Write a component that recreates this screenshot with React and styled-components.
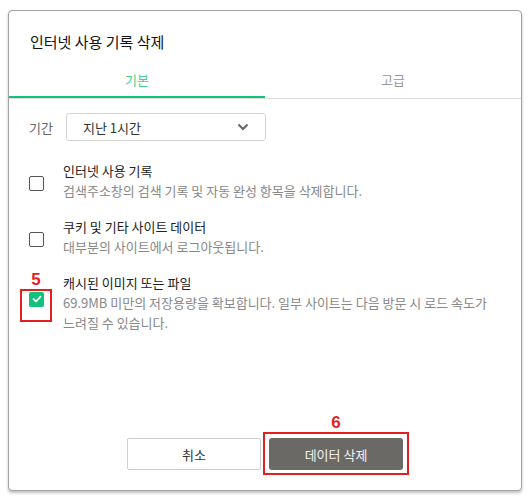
import React, { useState } from 'react'
import styled, { createGlobalStyle } from 'styled-components'

const GlobalStyle = createGlobalStyle`
    html, body {
        margin: 0;
        padding: 0;
        background: #ffffff;
    }
    body {
        font-family: "Noto Sans CJK KR", "Noto Sans", sans-serif;
    }
`

const items = [
    { title: '인터넷 사용 기록', desc: ['검색주소창의 검색 기록 및 자동 완성 항목을 삭제합니다.'], checked: false },
    { title: '쿠키 및 기타 사이트 데이터', desc: ['대부분의 사이트에서 로그아웃됩니다.'], checked: false },
    {
        title: '캐시된 이미지 또는 파일',
        desc: ['69.9MB 미만의 저장용량을 확보합니다. 일부 사이트는 다음 방문 시 로드 속도가', '느려질 수 있습니다.'],
        checked: true,
        mark: '5',
    },
]

function CheckIcon() {
    return (
        <svg width="10" height="8" viewBox="0 0 10 8">
            <polyline points="1.5,4 4,6.3 8.5,1.6" fill="none" stroke="#fff" strokeWidth="1.8" strokeLinecap="round" strokeLinejoin="round" />
        </svg>
    )
}

function App() {
    const [tab, setTab] = useState(0)
    const [checks, setChecks] = useState(items.map((i) => i.checked))

    const toggle = (index) => {
        setChecks(checks.map((c, i) => (i === index ? !c : c)))
    }

    return (
        <>
            <GlobalStyle />
            <Page>
                <Dialog>
                    <Title>인터넷 사용 기록 삭제</Title>
                    <Tabs>
                        {['기본', '고급'].map((t, i) => (
                            <Tab key={t} $active={tab === i} onClick={() => setTab(i)}>{t}</Tab>
                        ))}
                    </Tabs>
                    <Content>
                        <PeriodRow>
                            <PeriodLabel>기간</PeriodLabel>
                            <Select>
                                <span>지난 1시간</span>
                                <svg width="12" height="8" viewBox="0 0 12 8">
                                    <polyline points="1.5,1.5 6,6 10.5,1.5" fill="none" stroke="#666" strokeWidth="2" />
                                </svg>
                            </Select>
                        </PeriodRow>
                        <ItemList>
                            {items.map((item, index) => (
                                <Item key={index}>
                                    <BoxWrap $shift={item.desc.length > 1}>
                                        <Box $checked={checks[index]} onClick={() => toggle(index)}>
                                            {checks[index] && <CheckIcon />}
                                        </Box>
                                        {item.mark && (
                                            <Mark>
                                                <MarkNumber>{item.mark}</MarkNumber>
                                            </Mark>
                                        )}
                                    </BoxWrap>
                                    <ItemText>
                                        <ItemTitle>{item.title}</ItemTitle>
                                        {item.desc.map((d) => (
                                            <ItemDesc key={d}>{d}</ItemDesc>
                                        ))}
                                    </ItemText>
                                </Item>
                            ))}
                        </ItemList>
                    </Content>
                    <Footer>
                        <CancelButton>취소</CancelButton>
                        <DeleteWrap>
                            <DeleteButton>데이터 삭제</DeleteButton>
                            <Mark $button>
                                <MarkNumber>6</MarkNumber>
                            </Mark>
                        </DeleteWrap>
                    </Footer>
                </Dialog>
            </Page>
        </>
    )
}

const Page = styled.div`
    width: 530px;
    height: 500px;
    padding: 10px 0 0 8px;
    box-sizing: border-box;
`

const Dialog = styled.div`
    width: 514px;
    height: 481px;
    box-sizing: border-box;
    border: 1px solid #a3a3a3;
    border-radius: 4px;
    box-shadow: 0 2px 3px rgba(0, 0, 0, 0.25);
    background: #fff;
    display: flex;
    flex-direction: column;
`

const Title = styled.div`
    padding: 21px 0 0 21px;
    height: 30px;
    font-size: 15px;
    line-height: 20px;
    color: #111;
`

const Tabs = styled.div`
    display: flex;
    border-bottom: 1px solid #dcdcdc;
`

const Tab = styled.div`
    flex: 1;
    height: 36px;
    box-sizing: border-box;
    display: flex;
    align-items: center;
    justify-content: center;
    font-size: 13px;
    color: ${(p) => (p.$active ? '#3fcf8f' : '#999')};
    border-bottom: 2px solid ${(p) => (p.$active ? '#12c27a' : 'transparent')};
    cursor: pointer;
`

const Content = styled.div`
    flex: 1;
    padding: 14px 20px 0 20px;
`

const PeriodRow = styled.div`
    display: flex;
    align-items: center;
    gap: 13px;
`

const PeriodLabel = styled.span`
    font-size: 13px;
    color: #666;
`

const Select = styled.div`
    width: 200px;
    height: 28px;
    box-sizing: border-box;
    border: 1px solid #d6d6d6;
    border-radius: 3px;
    display: flex;
    align-items: center;
    justify-content: space-between;
    padding: 0 16px 0 16px;
    font-size: 13px;
    color: #333;
`

const ItemList = styled.div`
    display: flex;
    flex-direction: column;
    gap: 16px;
    margin-top: 20px;
`

const Item = styled.div`
    display: flex;
    align-items: center;
`

const BoxWrap = styled.div`
    position: relative;
    width: 34px;
    display: flex;
    margin-top: ${(p) => (p.$shift ? '-8px' : '4px')};
`

const Box = styled.div`
    width: 15px;
    height: 15px;
    box-sizing: border-box;
    border: ${(p) => (p.$checked ? 'none' : '1.5px solid #555')};
    background: ${(p) => (p.$checked ? '#12c27a' : '#fff')};
    border-radius: 2px;
    display: flex;
    align-items: center;
    justify-content: center;
    cursor: pointer;
`

const Mark = styled.div`
    position: absolute;
    left: ${(p) => (p.$button ? '-6px' : '-9px')};
    top: ${(p) => (p.$button ? '-6px' : '-3px')};
    width: ${(p) => (p.$button ? '146px' : '32px')};
    height: ${(p) => (p.$button ? '43px' : '33px')};
    box-sizing: border-box;
    border: 2px solid #e41f1f;
    pointer-events: none;
`

const MarkNumber = styled.span`
    position: absolute;
    left: 0;
    right: 0;
    bottom: 100%;
    margin-bottom: 3px;
    text-align: center;
    font-family: "Liberation Sans", sans-serif;
    font-weight: 700;
    font-size: 17px;
    line-height: 17px;
    color: #e41f1f;
`

const ItemText = styled.div`
    display: flex;
    flex-direction: column;
`

const ItemTitle = styled.div`
    font-size: 13px;
    line-height: 20px;
    color: #222;
`

const ItemDesc = styled.div`
    font-size: 13px;
    line-height: 20px;
    color: #888;
`

const Footer = styled.div`
    display: flex;
    justify-content: center;
    gap: 8px;
    padding-bottom: 20px;
`

const CancelButton = styled.button`
    width: 134px;
    height: 32px;
    border: 1px solid #cfcfcf;
    border-radius: 2px;
    background: #fff;
    font-family: inherit;
    font-size: 13px;
    color: #333;
`

const DeleteWrap = styled.div`
    position: relative;
`

const DeleteButton = styled.button`
    width: 134px;
    height: 32px;
    border: none;
    border-radius: 3px;
    background: #6b6966;
    font-family: inherit;
    font-size: 13px;
    color: #f2f2f2;
`

export default App
